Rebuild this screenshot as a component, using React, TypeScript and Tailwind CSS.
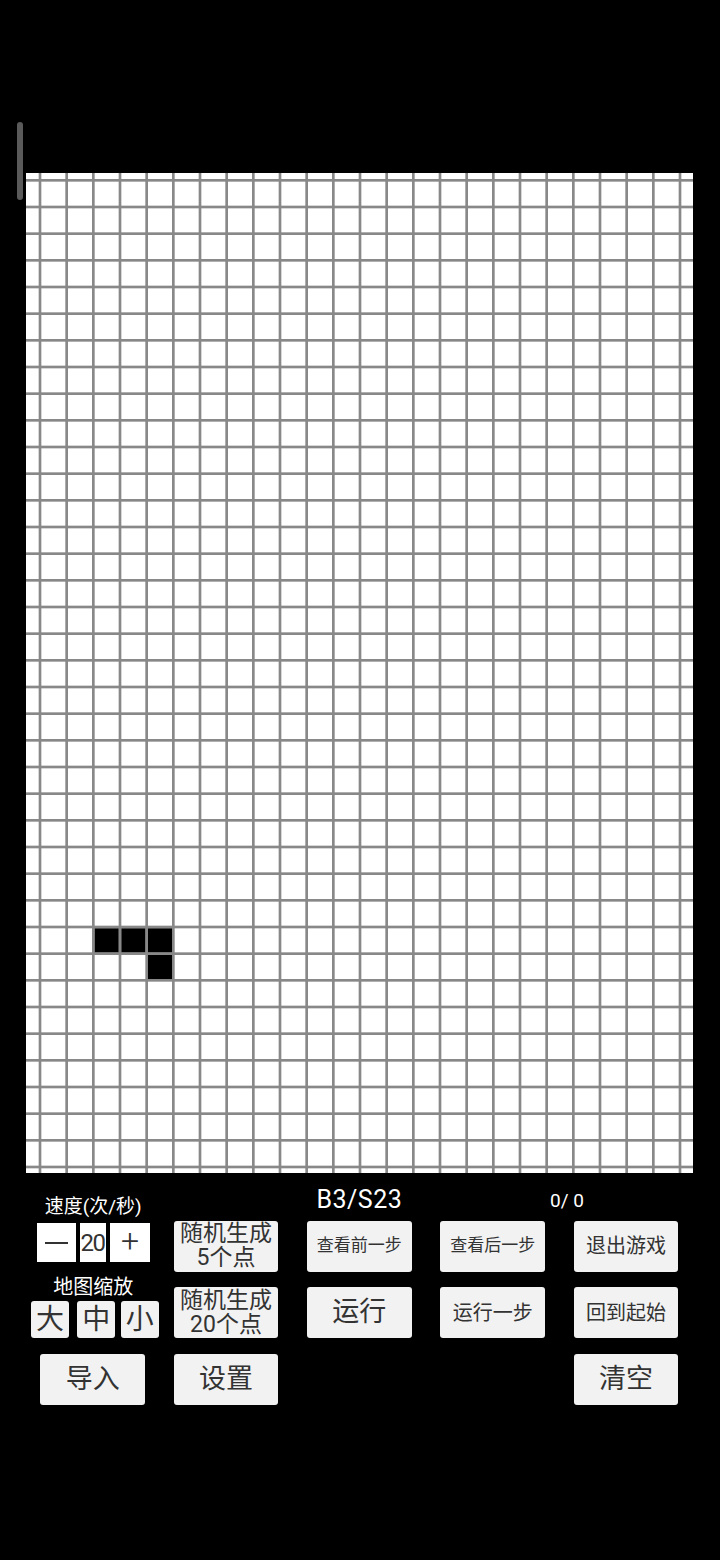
import React from "react"

const PITCH = 80 / 3
const LINE = 8 / 3
const BOARD_W = 667.33
const BOARD_H = 1000

// live cells: [col, row]
const alive: [number, number][] = [
    [2, 28],
    [3, 28],
    [4, 28],
    [4, 29],
]

const font = { fontFamily: "Roboto, 'Noto Sans CJK SC', sans-serif" }

function Board() {
    const vLines = Array.from({ length: 25 }, (_, k) => 12.67 + k * PITCH)
    const hLines = Array.from({ length: 38 }, (_, k) => 6 + k * PITCH)

    return (
        <svg width={BOARD_W} height={BOARD_H} viewBox={`0 0 ${BOARD_W} ${BOARD_H}`} className="block">
            <rect x={0} y={0} width={BOARD_W} height={BOARD_H} fill="#ffffff" />
            {vLines.map((x, i) => (
                <rect key={"v" + i} x={x} y={0} width={LINE} height={BOARD_H} fill="#888888" />
            ))}
            {hLines.map((y, i) => (
                <rect key={"h" + i} x={0} y={y} width={BOARD_W} height={LINE} fill="#888888" />
            ))}
            {alive.map(([c, r]) => (
                <rect
                    key={`${c}-${r}`}
                    x={12.67 + c * PITCH + LINE}
                    y={6 + r * PITCH + LINE}
                    width={PITCH - LINE}
                    height={PITCH - LINE}
                    fill="#000000"
                />
            ))}
        </svg>
    )
}

function Btn({ children, className = "" }: { children: React.ReactNode, className?: string }) {
    return (
        <div className={`flex items-center justify-center rounded-[3px] bg-[#f2f2f2] text-[#333333] text-center ${className}`}>
            {children}
        </div>
    )
}

function Cell({ children }: { children?: React.ReactNode }) {
    return <div className="flex justify-center">{children}</div>
}

export default function App() {
    return (
        <div className="relative w-[720px] h-[1560px] bg-black overflow-hidden" style={font}>
            {/* scroll indicator */}
            <div className="absolute left-[16.7px] top-[122px] w-[6.7px] h-[78px] rounded-full bg-[#5a5a5a]" />

            <div className="pl-[26px] pt-[172.5px]">
                <Board />

                <div className="flex w-[666.67px]">
                    {/* left column: speed + zoom + import */}
                    <div className="w-[133.33px] flex flex-col">
                        <div className="mt-[23.5px] h-[22px] leading-[22px] text-[19px] text-white text-center pl-[1px]">速度(次/秒)</div>
                        <div className="mt-[5px] flex pl-[10.7px] gap-[4px]">
                            <div className="w-[39.3px] h-[39.4px] bg-white flex items-center justify-center">
                                <div className="w-[23px] h-[2.3px] bg-[#333333]" />
                            </div>
                            <div className="w-[26px] h-[39.4px] bg-white flex items-center justify-center text-[24px] tracking-[-1.5px] text-[#333333] pr-[1px]">20</div>
                            <div className="w-[40px] h-[39.4px] bg-white flex items-center justify-center text-[32px] font-light text-[#333333] leading-none pb-[3px]">+</div>
                        </div>
                        <div className="mt-[12.3px] h-[24px] leading-[24px] text-[20px] text-white text-center pl-[1px]">地图缩放</div>
                        <div className="mt-[2.3px] flex">
                            <Btn className="ml-[5.3px] w-[37.4px] h-[37.4px] text-[28px]">大</Btn>
                            <Btn className="ml-[8.6px] w-[38px] h-[37.4px] text-[28px]">中</Btn>
                            <Btn className="ml-[5.4px] w-[38px] h-[37.4px] text-[28px]">小</Btn>
                        </div>
                        <div className="mt-[15.3px] flex justify-center">
                            <Btn className="w-[104.7px] h-[51.3px] text-[27px]">导入</Btn>
                        </div>
                    </div>

                    {/* right grid */}
                    <div className="w-[533.33px]">
                        <div className="h-[48px] flex">
                            <div className="w-[133.33px]" />
                            <div className="w-[133.33px] pt-[13px] text-center text-white text-[25px] tracking-[0.5px] leading-[28px]">B3/S23</div>
                            <div className="pl-[124px] pt-[17px] text-white text-[19px] leading-[22px] whitespace-pre">0/ 0</div>
                        </div>
                        <div className="grid grid-cols-4 gap-y-[15.3px]">
                            <Cell>
                                <Btn className="w-[104.7px] h-[51.3px] text-[23px] flex-col">
                                    <span className="block h-[24px] leading-[24px]">随机生成</span>
                                    <span className="block h-[24px] leading-[24px]">5个点</span>
                                </Btn>
                            </Cell>
                            <Cell><Btn className="w-[104.7px] h-[51.3px] text-[17px]">查看前一步</Btn></Cell>
                            <Cell><Btn className="w-[104.7px] h-[51.3px] text-[17px]">查看后一步</Btn></Cell>
                            <Cell><Btn className="w-[104.7px] h-[51.3px] text-[20px]">退出游戏</Btn></Cell>

                            <Cell>
                                <Btn className="w-[104.7px] h-[51.3px] text-[23px] flex-col">
                                    <span className="block h-[24px] leading-[24px]">随机生成</span>
                                    <span className="block h-[24px] leading-[24px]">20个点</span>
                                </Btn>
                            </Cell>
                            <Cell><Btn className="w-[104.7px] h-[51.3px] text-[27px]">运行</Btn></Cell>
                            <Cell><Btn className="w-[104.7px] h-[51.3px] text-[20px]">运行一步</Btn></Cell>
                            <Cell><Btn className="w-[104.7px] h-[51.3px] text-[20px]">回到起始</Btn></Cell>

                            <Cell><Btn className="w-[104.7px] h-[51.3px] text-[27px]">设置</Btn></Cell>
                            <Cell />
                            <Cell />
                            <Cell><Btn className="w-[104.7px] h-[51.3px] text-[27px]">清空</Btn></Cell>
                        </div>
                    </div>
                </div>
            </div>
        </div>
    )
}
